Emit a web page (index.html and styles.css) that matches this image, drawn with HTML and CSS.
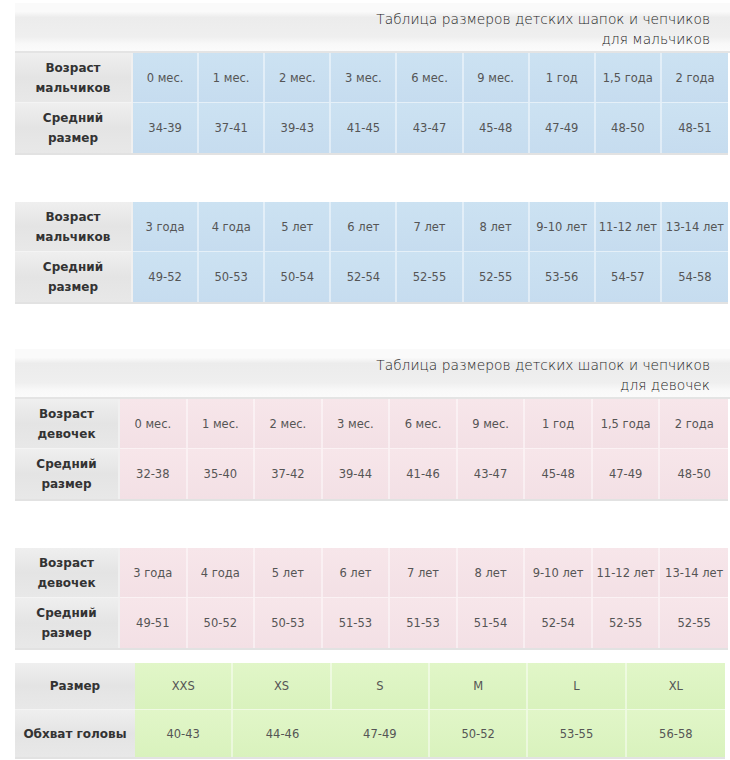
FILE: index.html
```html
<!DOCTYPE html>
<html lang="ru">
<head>
<meta charset="utf-8">
<link rel="stylesheet" href="styles.css">
</head>
<body>
<div class="page">
  <div class="title title-first">
    <div>Таблица размеров детских шапок и чепчиков</div>
    <div>для мальчиков</div>
  </div>
  <div class="table boy t9a">
    <div class="head r1">Возраст<br>мальчиков</div>
    <div class="c r1">0 мес.</div><div class="c r1">1 мес.</div><div class="c r1">2 мес.</div><div class="c r1">3 мес.</div><div class="c r1">6 мес.</div><div class="c r1">9 мес.</div><div class="c r1">1 год</div><div class="c r1">1,5 года</div><div class="c r1">2 года</div>
    <div class="head">Средний<br>размер</div>
    <div class="c">34-39</div><div class="c">37-41</div><div class="c">39-43</div><div class="c">41-45</div><div class="c">43-47</div><div class="c">45-48</div><div class="c">47-49</div><div class="c">48-50</div><div class="c">48-51</div>
  </div>

  <div class="table boy t9a gap-big">
    <div class="head r1">Возраст<br>мальчиков</div>
    <div class="c r1">3 года</div><div class="c r1">4 года</div><div class="c r1">5 лет</div><div class="c r1">6 лет</div><div class="c r1">7 лет</div><div class="c r1">8 лет</div><div class="c r1">9-10 лет</div><div class="c r1">11-12 лет</div><div class="c r1">13-14 лет</div>
    <div class="head">Средний<br>размер</div>
    <div class="c">49-52</div><div class="c">50-53</div><div class="c">50-54</div><div class="c">52-54</div><div class="c">52-55</div><div class="c">52-55</div><div class="c">53-56</div><div class="c">54-57</div><div class="c">54-58</div>
  </div>

  <div class="title title-second">
    <div>Таблица размеров детских шапок и чепчиков</div>
    <div>для девочек</div>
  </div>
  <div class="table girl t9b">
    <div class="head r1">Возраст<br>девочек</div>
    <div class="c r1">0 мес.</div><div class="c r1">1 мес.</div><div class="c r1">2 мес.</div><div class="c r1">3 мес.</div><div class="c r1">6 мес.</div><div class="c r1">9 мес.</div><div class="c r1">1 год</div><div class="c r1">1,5 года</div><div class="c r1">2 года</div>
    <div class="head">Средний<br>размер</div>
    <div class="c">32-38</div><div class="c">35-40</div><div class="c">37-42</div><div class="c">39-44</div><div class="c">41-46</div><div class="c">43-47</div><div class="c">45-48</div><div class="c">47-49</div><div class="c">48-50</div>
  </div>

  <div class="table girl t9b gap-big">
    <div class="head r1">Возраст<br>девочек</div>
    <div class="c r1">3 года</div><div class="c r1">4 года</div><div class="c r1">5 лет</div><div class="c r1">6 лет</div><div class="c r1">7 лет</div><div class="c r1">8 лет</div><div class="c r1">9-10 лет</div><div class="c r1">11-12 лет</div><div class="c r1">13-14 лет</div>
    <div class="head">Средний<br>размер</div>
    <div class="c">49-51</div><div class="c">50-52</div><div class="c">50-53</div><div class="c">51-53</div><div class="c">51-53</div><div class="c">51-54</div><div class="c">52-54</div><div class="c">52-55</div><div class="c">52-55</div>
  </div>

  <div class="table green t6 gap-small">
    <div class="head r1">Размер</div>
    <div class="c r1">XXS</div><div class="c r1">XS</div><div class="c r1">S</div><div class="c r1">M</div><div class="c r1">L</div><div class="c r1">XL</div>
    <div class="head">Обхват головы</div>
    <div class="c">40-43</div><div class="c">44-46</div><div class="c">47-49</div><div class="c">50-52</div><div class="c">53-55</div><div class="c">56-58</div>
  </div>
</div>
</body>
</html>
```
FILE: styles.css
```css
html, body {
  margin: 0;
  padding: 0;
  background: #ffffff;
}
.page {
  width: 730px;
  height: 760px;
  overflow: hidden;
  padding-left: 15px;
  box-sizing: border-box;
  font-family: "DejaVu Sans", Verdana, sans-serif;
}
.title {
  height: 50px;
  box-sizing: border-box;
  padding: 0 20px 0 0;
  text-align: right;
  font-family: "DejaVu Sans", sans-serif;
  font-weight: 300;
  font-size: 13.8px;
  line-height: 20px;
  color: #1e1e1e;
  background: linear-gradient(to bottom, #fafafa 0%, #fafafa 18%, #ececec 30%, #efefef 70%, #f8f8f8 85%, #fbfbfb 100%);
  border-bottom: 2px solid #e4e4e4;
}
.title div:first-child { padding-top: 6px; }
.title-first { margin-top: 3px; }
.title-second { margin-top: 45px; }

.table {
  display: grid;
  grid-template-rows: 50px 50px;
  font-size: 11.5px;
  color: #555;
  border-bottom: 2px solid #e2e2e2;
}
.t9a { width: 713px; grid-template-columns: 118px repeat(9, 1fr); }
.t9b { width: 713px; grid-template-columns: 105px repeat(9, 1fr); }
.t6 { width: 710px; grid-template-columns: 120px repeat(6, 1fr); grid-template-rows: 47px 47px; }
.gap-big { margin-top: 47px; }
.gap-small { margin-top: 13px; }

.head {
  display: flex;
  align-items: center;
  justify-content: center;
  text-align: center;
  font-weight: bold;
  font-size: 12px;
  line-height: 20px;
  color: #333;
  background: linear-gradient(to bottom, #efefef 0%, #e4e4e4 50%, #e8e8e8 100%);
  border-right: 2px solid #f0f0f0;
}
.head.r1 { border-bottom: 1px solid #f4f4f4; }
.c {
  display: flex;
  align-items: center;
  justify-content: center;
  white-space: nowrap;
  border-right: 2px solid rgba(255, 255, 255, 0.45);
}
.c.r1 { border-bottom: 1px solid rgba(255, 255, 255, 0.5); }
.c:last-child, .c:nth-child(10) { border-right: none; }

.boy .c { background: linear-gradient(to bottom, #cce2f2 0%, #c6dcef 100%); }
.girl .c { background: linear-gradient(to bottom, #f7e6ea 0%, #f3e0e5 100%); }
.green .c { background: linear-gradient(to bottom, #e1f6c8 0%, #d9f2bd 100%); }
.green .c:nth-child(7) { border-right: none; }
.green .c:last-child { border-right: none; }
.green .head { border-right: none; }
```
